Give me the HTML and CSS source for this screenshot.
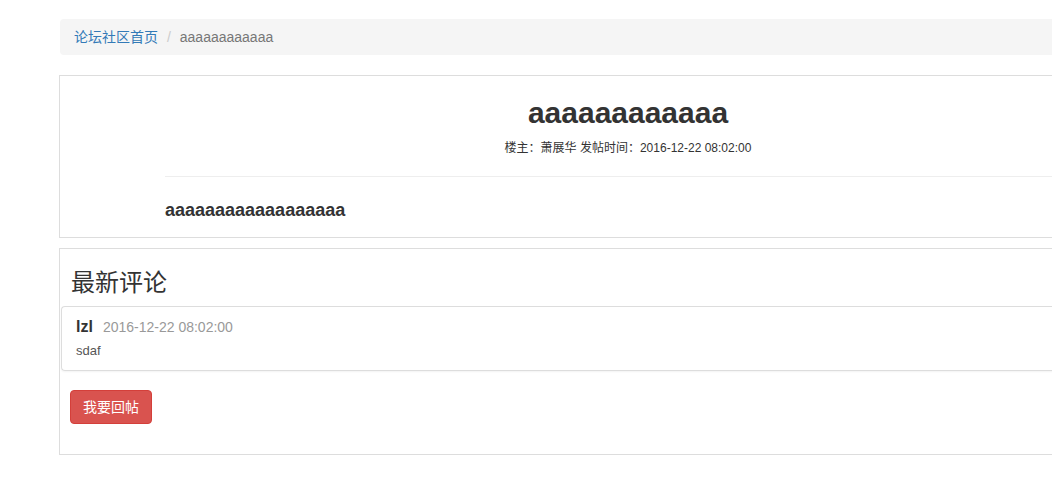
FILE: index.html
```html
<!DOCTYPE html>
<html lang="zh-CN">
<head>
<meta charset="utf-8">
<title>aaaaaaaaaaaa</title>
<link rel="stylesheet" href="styles.css">
</head>
<body>
<div class="page">
  <ol class="breadcrumb">
    <li><a href="#">论坛社区首页</a></li>
    <li class="active">aaaaaaaaaaaa</li>
  </ol>

  <div class="panel post">
    <div class="post-col">
      <h1 class="post-title">aaaaaaaaaaaa</h1>
      <p class="post-meta">楼主：萧展华 发帖时间：2016-12-22 08:02:00</p>
      <hr class="post-rule">
      <div class="post-body">aaaaaaaaaaaaaaaaaa</div>
    </div>
  </div>

  <div class="panel comments">
    <h3 class="comments-title">最新评论</h3>
    <div class="comment">
      <div class="comment-head"><span class="comment-user">lzl</span><span class="comment-time">2016-12-22 08:02:00</span></div>
      <div class="comment-text">sdaf</div>
    </div>
    <div class="actions">
      <button class="btn-reply" type="button">我要回帖</button>
    </div>
  </div>
</div>
</body>
</html>
```
FILE: styles.css
```css
html, body {
  margin: 0;
  padding: 0;
  background: #fff;
  overflow: hidden;
}
body {
  font-family: "Liberation Sans", Arial, "Noto Sans CJK SC", sans-serif;
  font-size: 14px;
  line-height: 20px;
  color: #333;
}
.page {
  width: 1141px;
  padding: 19px 0 0 59px;
}
.breadcrumb {
  list-style: none;
  margin: 0 0 20px 1px;
  padding: 8px 14px;
  background: #f5f5f5;
  border-radius: 4px;
  display: flex;
}
.breadcrumb li + li {
  margin-left: 4px;
}
.breadcrumb li + li::before {
  content: "/\00a0";
  padding: 0 5px;
  color: #ccc;
}
.breadcrumb a {
  color: #337ab7;
  text-decoration: none;
}
.breadcrumb .active {
  color: #777;
}
.panel {
  border: 1px solid #ddd;
  background: #fff;
  margin-bottom: 10px;
}
.post-col {
  margin-left: 105px;
  width: 926px;
  padding: 20px 0 17px;
}
.post-title {
  margin: 0;
  font-size: 30px;
  line-height: 33px;
  font-weight: bold;
  text-align: center;
  color: #333;
}
.post-meta {
  margin: 9px 0 0;
  font-size: 12px;
  line-height: 20px;
  text-align: center;
  color: #333;
}
.post-rule {
  margin: 18px 0 0;
  border: 0;
  border-top: 1px solid #eee;
  height: 0;
  width: 1000px;
}
.post-body {
  margin-top: 23px;
  font-size: 18px;
  line-height: 20px;
  font-weight: bold;
  color: #333;
}
.comments {
  padding: 19px 0 30px;
}
.comments-title {
  margin: 0 0 12px 11px;
  font-family: "Noto Sans CJK SC", sans-serif;
  font-size: 24px;
  line-height: 26px;
  font-weight: normal;
  color: #333;
}
.comment {
  margin-left: 1px;
  border: 1px solid #ddd;
  border-right: 0;
  border-radius: 4px 0 0 4px;
  box-shadow: 0 1px 2px rgba(0,0,0,0.05);
  padding: 10px 14px 9px;
}
.comment-head {
  display: flex;
  align-items: baseline;
  gap: 10px;
}
.comment-user {
  font-size: 16px;
  font-weight: bold;
  color: #333;
}
.comment-time {
  font-size: 14px;
  color: #999;
}
.comment-text {
  margin-top: 4px;
  font-size: 13px;
  color: #555;
}
.actions {
  padding: 19px 0 0 10px;
}
.btn-reply {
  font-family: "Liberation Sans", "Noto Sans CJK SC", sans-serif;
  font-size: 14px;
  line-height: 20px;
  color: #fff;
  background: #d9534f;
  border: 1px solid #d43f3a;
  border-radius: 4px;
  padding: 6px 12px;
  cursor: pointer;
}
```
